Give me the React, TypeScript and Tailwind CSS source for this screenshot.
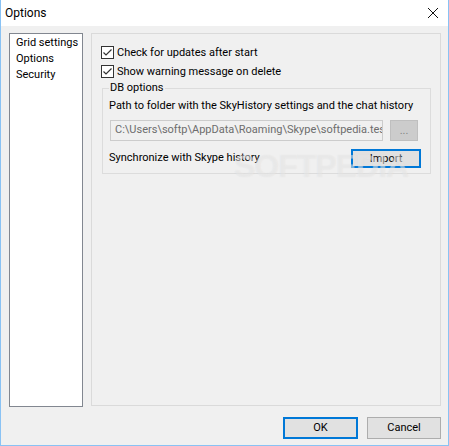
import React from "react";

const font = { fontFamily: 'Roboto, "Liberation Sans", sans-serif' };

function CheckBox({ label }: { label: string }) {
  return (
    <div className="flex items-center h-[19px]">
      <div className="w-[13px] h-[13px] border border-[#333333] bg-white flex items-center justify-center">
        <svg width="11" height="11" viewBox="0 0 11 11">
          <path d="M1.5 5.5 L4 8 L9.5 2.5" fill="none" stroke="#333333" strokeWidth="1.2" />
        </svg>
      </div>
      <span className="ml-[3px] leading-none whitespace-nowrap">{label}</span>
    </div>
  );
}

export default function App() {
  return (
    <div
      className="w-[449px] h-[446px] flex flex-col border-x border-b border-[#89c2f4] bg-[#f0f0f0] text-[11px] text-black overflow-hidden"
      style={font}
    >
      {/* title bar */}
      <div className="h-[26px] bg-white flex items-center justify-between pl-[4px] pr-[9px]">
        <span className="text-[12px]">Options</span>
        <svg width="12" height="12" viewBox="0 0 12 12">
          <path d="M1 1 L11 11 M11 1 L1 11" stroke="#111111" strokeWidth="1" />
        </svg>
      </div>

      <div className="flex-1 flex flex-col pt-[7px] pl-[8px] pr-[7px]">
        <div className="flex gap-[8px] h-[374px]">
          {/* tree / list */}
          <div className="w-[74px] h-[374px] bg-white border border-[#828790] pt-[1px] pl-[6px] whitespace-nowrap">
            <div className="h-[16px] flex items-center">Grid settings</div>
            <div className="h-[16px] flex items-center">Options</div>
            <div className="h-[16px] flex items-center">Security</div>
          </div>

          {/* options panel */}
          <div className="relative w-[350px] h-[373px] border border-[#dadada] pl-[9px] pt-[9px] pr-[9px]">
            <CheckBox label="Check for updates after start" />
            <CheckBox label="Show warning message on delete" />

            <fieldset className="ml-[1px] w-[329px] min-w-0 border border-[#dcdcdc] pl-[6px] pr-[9px] pb-[5px]">
              <legend className="px-[1px] leading-[14px]">DB options</legend>
              <div className="h-[16px] flex items-center mt-[3px] whitespace-nowrap">
                Path to folder with the SkyHistory settings and the chat history
              </div>
              <div className="flex items-center mt-[6px] gap-[7px] pl-[1px]">
                <div className="w-[273px] h-[21px] shrink-0 bg-[#f0f0f0] border border-[#cccccc] flex items-center pl-[4px] overflow-hidden whitespace-nowrap text-[#6d6d6d]">
                  C:\Users\softp\AppData\Roaming\Skype\softpedia.test
                </div>
                <div className="w-[28px] h-[21px] shrink-0 bg-[#cccccc] border border-[#bfbfbf] flex items-center justify-center text-[#838383] leading-none">
                  ...
                </div>
              </div>
              <div className="flex items-center justify-between mt-[8px]">
                <span className="whitespace-nowrap">Synchronize with Skype history</span>
                <button className="w-[70px] h-[19px] bg-[#e1e1e1] border-2 border-[#0078d7] flex items-center justify-center leading-none">
                  Import
                </button>
              </div>
            </fieldset>

            {/* screenshot watermark */}
            <div
              className="absolute left-[142px] top-[116px] text-[32px] leading-none font-bold tracking-[-1px] text-white/30 select-none pointer-events-none whitespace-nowrap"
              style={{ fontFamily: '"Liberation Sans", sans-serif', textShadow: "0 0 1px rgba(200,200,200,0.4)" }}
            >
              SOFTPEDIA
            </div>
          </div>
        </div>

        {/* buttons */}
        <div className="flex justify-end gap-[9px] mt-[10px]">
          <button className="w-[75px] h-[22px] bg-[#e1e1e1] border-2 border-[#0078d7] flex items-center justify-center">
            OK
          </button>
          <button className="w-[74px] h-[22px] bg-[#e1e1e1] border border-[#adadad] flex items-center justify-center">
            Cancel
          </button>
        </div>
      </div>
    </div>
  );
}
